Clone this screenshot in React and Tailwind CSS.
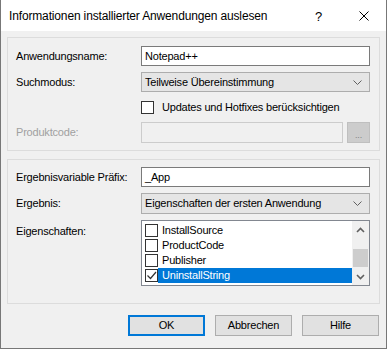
import React from "react";

const Chevron = ({ up = false, className = "" }) => (
  <svg width="9" height="5" viewBox="0 0 9 5" className={className}>
    <path d={up ? "M0.5 4.5 L4.5 0.5 L8.5 4.5" : "M0.5 0.5 L4.5 4.5 L8.5 0.5"} fill="none" stroke="#606060" strokeWidth="1" />
  </svg>
);

const ScrollArrow = ({ up = false }) => (
  <svg width="9" height="6" viewBox="0 0 9 6">
    <path d={up ? "M1 5 L4.5 1.5 L8 5" : "M1 1 L4.5 4.5 L8 1"} fill="none" stroke="#606060" strokeWidth="1.6" />
  </svg>
);

const Check = () => (
  <svg width="11" height="11" viewBox="0 0 11 11">
    <path d="M1.5 5.5 L4.5 8.5 L10 2" fill="none" stroke="#333" strokeWidth="1.2" />
  </svg>
);

const Box = ({ checked }) => (
  <div className="w-[13px] h-[13px] border border-[#333333] bg-white flex items-center justify-center shrink-0">
    {checked && <Check />}
  </div>
);

export default function App() {
  const items = ["InstallSource", "ProductCode", "Publisher", "UninstallString"];
  return (
    <div
      className="w-[387px] h-[349px] flex flex-col bg-[#f0f0f0] border-x border-b border-[#777777] text-[11px] tracking-[-0.2px] text-black overflow-hidden whitespace-nowrap"
      style={{ fontFamily: '"Liberation Sans", Arial, sans-serif' }}
    >
      {/* title bar */}
      <div className="h-[31px] bg-white flex items-center shrink-0 relative tracking-normal">
        <span className="ml-[8px] text-[12px] tracking-[-0.15px]">Informationen installierter Anwendungen auslesen</span>
        <span className="absolute left-[314px] top-[7px] text-[13px]">?</span>
        <svg className="absolute left-[358px] top-[11px]" width="10" height="10" viewBox="0 0 10 10">
          <path d="M0.5 0.5 L9.5 9.5 M9.5 0.5 L0.5 9.5" stroke="#000" strokeWidth="1" />
        </svg>
      </div>

      {/* group 1 */}
      <div className="ml-[6px] mt-[6px] w-[373px] h-[114px] border border-[#dcdcdc] pt-[8px] pl-[8px] pr-[9px] flex flex-col">
        <div className="flex items-center h-[20px]">
          <span className="w-[125px]">Anwendungsname:</span>
          <div className="w-[229px] h-[20px] border border-[#7a7a7a] bg-white flex items-center pl-[3px]">Notepad++</div>
        </div>
        <div className="flex items-center h-[20px] mt-[6px]">
          <span className="w-[125px]">Suchmodus:</span>
          <div className="w-[229px] h-[20px] border border-[#adadad] bg-[#e5e5e5] flex items-center pl-[3px] pr-[7px] justify-between">
            <span>Teilweise Übereinstimmung</span>
            <Chevron />
          </div>
        </div>
        <div className="flex items-center h-[14px] mt-[8px] pl-[125px]">
          <Box />
          <span className="ml-[8px]">Updates und Hotfixes berücksichtigen</span>
        </div>
        <div className="flex items-center h-[21px] mt-[8px]">
          <span className="w-[125px] text-[#a0a0a0]">Produktcode:</span>
          <div className="w-[202px] h-[21px] border border-[#cccccc] bg-[#f0f0f0]" />
          <div className="ml-[4px] w-[23px] h-[21px] border border-[#bfbfbf] bg-[#cccccc] flex items-center justify-center text-[#838383] text-[9px] leading-none pt-[5px]">...</div>
        </div>
      </div>

      {/* group 2 */}
      <div className="ml-[6px] mt-[8px] w-[373px] h-[145px] border border-[#dcdcdc] pt-[7px] pl-[8px] pr-[9px] flex flex-col">
        <div className="flex items-center h-[20px]">
          <span className="w-[125px]">Ergebnisvariable Präfix:</span>
          <div className="w-[229px] h-[20px] border border-[#7a7a7a] bg-white flex items-center pl-[3px]">_App</div>
        </div>
        <div className="flex items-center h-[21px] mt-[6px]">
          <span className="w-[125px]">Ergebnis:</span>
          <div className="w-[229px] h-[21px] border border-[#adadad] bg-[#e5e5e5] flex items-center pl-[3px] pr-[7px] justify-between">
            <span>Eigenschaften der ersten Anwendung</span>
            <Chevron />
          </div>
        </div>
        <div className="flex items-start mt-[6px]">
          <span className="w-[125px] mt-[3px]">Eigenschaften:</span>
          <div className="w-[229px] h-[66px] border border-[#828790] bg-white flex">
            <div className="flex-1 flex flex-col pt-[2px] pl-[3px]">
              {items.map((it, i) => (
                <div key={it} className="h-[15px] flex items-center">
                  <Box checked={i === 3} />
                  <div className={"flex-1 h-[15px] flex items-center pl-[4px] " + (i === 3 ? "bg-[#0078d7] text-white" : "")}>{it}</div>
                </div>
              ))}
            </div>
            <div className="w-[17px] bg-[#f0f0f0] flex flex-col items-center">
              <div className="h-[17px] flex items-center justify-center"><ScrollArrow up /></div>
              <div className="h-[11px]" />
              <div className="w-[15px] h-[18px] bg-[#cdcdcd]" />
              <div className="flex-1" />
              <div className="h-[17px] flex items-center justify-center"><ScrollArrow /></div>
            </div>
          </div>
        </div>
      </div>

      {/* buttons */}
      <div className="flex mt-[11px] ml-[127px] gap-[10px]">
        <div className="w-[77px] h-[21px] border-2 border-[#0078d7] bg-[#e1e1e1] flex items-center justify-center">OK</div>
        <div className="w-[77px] h-[21px] border border-[#adadad] bg-[#e1e1e1] flex items-center justify-center">Abbrechen</div>
        <div className="w-[77px] h-[21px] border border-[#adadad] bg-[#e1e1e1] flex items-center justify-center">Hilfe</div>
      </div>
    </div>
  );
}
